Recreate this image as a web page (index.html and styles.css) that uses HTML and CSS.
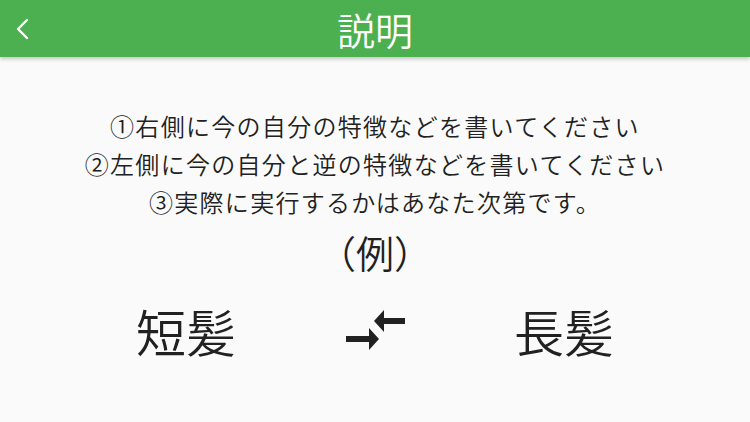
FILE: index.html
```html
<!DOCTYPE html>
<html lang="ja">
<head>
<meta charset="utf-8">
<link rel="stylesheet" href="styles.css">
</head>
<body>
<header class="appbar">
  <span class="back" aria-label="戻る">
    <svg width="16" height="24" viewBox="0 0 16 24"><polyline points="12,2 3,11 12,20" fill="none" stroke="#fff" stroke-width="2.4" stroke-linecap="round" stroke-linejoin="round"/></svg>
  </span>
  <h1 class="title">説明</h1>
</header>
<main class="content">
  <div class="steps">
    <p>①右側に今の自分の特徴などを書いてください</p>
    <p>②左側に今の自分と逆の特徴などを書いてください</p>
    <p>③実際に実行するかはあなた次第です。</p>
  </div>
  <p class="example">（例）</p>
  <div class="pair">
    <span class="word">短髪</span>
    <span class="swap">
      <svg width="64" height="44" viewBox="0 0 64 44">
        <polygon fill="#212121" points="31,13 41,2 41,10 62,10 62,16 41,16 41,24"/>
        <polygon fill="#212121" points="36,31 26,20 26,28 3,28 3,34 26,34 26,42"/>
      </svg>
    </span>
    <span class="word">長髪</span>
  </div>
</main>
</body>
</html>
```

FILE: styles.css
```css
html, body {
  margin: 0;
  padding: 0;
}
body {
  width: 750px;
  height: 422px;
  background: #fafafa;
  font-family: "Noto Sans CJK JP", "Noto Sans", sans-serif;
  color: #212121;
  overflow: hidden;
}
.appbar {
  position: relative;
  height: 57px;
  background: #4caf50;
  display: flex;
  align-items: center;
  justify-content: center;
  box-shadow: 0 2px 4px rgba(0, 0, 0, 0.22);
}
.back {
  position: absolute;
  left: 15px;
  top: 18px;
  display: flex;
}
.title {
  margin: 0;
  color: #fff;
  font-weight: 350;
  font-size: 38px;
  line-height: 57px;
}
.content {
  padding-top: 50px;
  display: flex;
  flex-direction: column;
  align-items: center;
}
.steps p {
  margin: 0;
  font-size: 24px;
  font-weight: 350;
  letter-spacing: 1.3px;
  line-height: 38px;
  text-align: center;
}
.example {
  margin: 12px 0 0;
  font-size: 38px;
  font-weight: 350;
  line-height: 38px;
}
.pair {
  margin-top: 29px;
  display: flex;
  align-items: center;
  justify-content: center;
  gap: 107px;
  height: 60px;
}
.word {
  font-size: 50px;
  font-weight: 350;
  line-height: 60px;
}
.swap {
  display: flex;
  width: 64px;
}
```
